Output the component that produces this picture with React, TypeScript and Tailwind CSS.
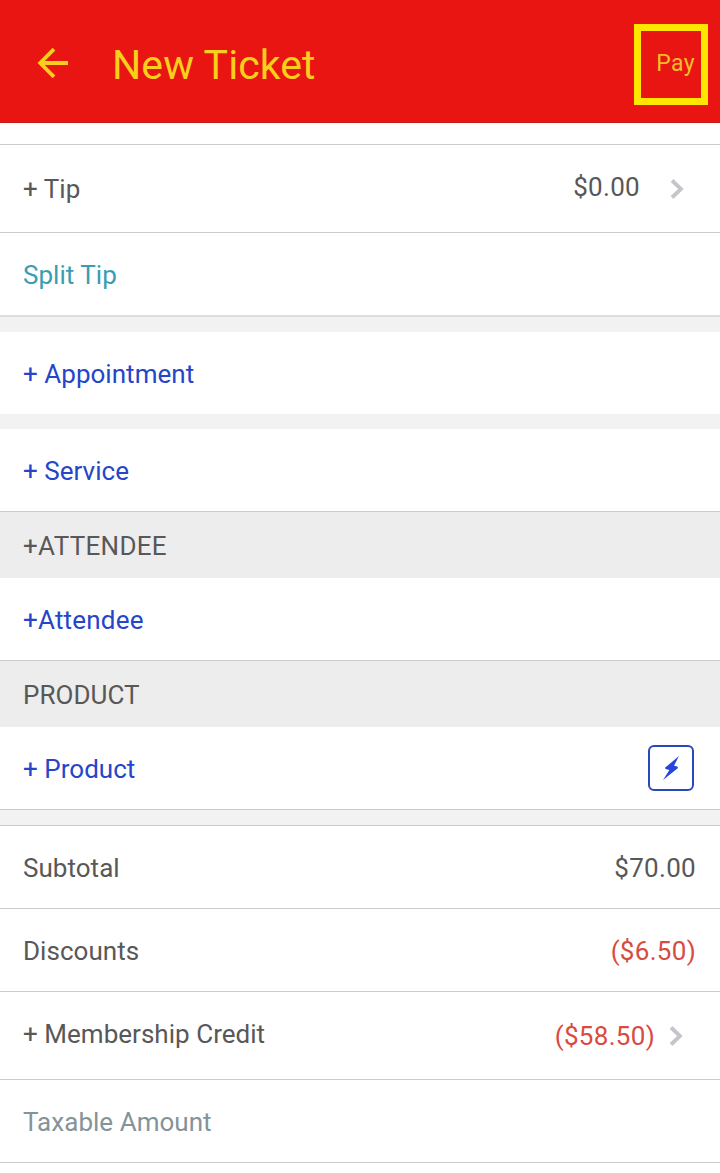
import { FC, ReactNode } from "react";
import clsx from "clsx";

const Chevron: FC = () => (
  <svg className="block h-5 w-3.5" viewBox="0 0 14 20" fill="none">
    <path d="M2 1.5 L11 10 L2 18.5" stroke="#c5c6cb" strokeWidth="3.8" />
  </svg>
);

interface IRowProps {
  label: string;
  className?: string;
  labelClassName?: string;
  children?: ReactNode;
}

const Row: FC<IRowProps> = ({ label, className, labelClassName, children }) => (
  <div
    className={clsx(
      "flex items-center justify-between pl-[23px] pr-6",
      className
    )}
  >
    <span className={labelClassName}>{label}</span>
    {children}
  </div>
);

const SectionTitle: FC<{ label: string; className?: string }> = ({
  label,
  className,
}) => (
  <h2
    className={clsx(
      "flex h-[67px] items-center border-t border-[#cbcbcb] bg-[#ededed] pl-[23px] pt-0.5",
      className
    )}
  >
    {label}
  </h2>
);

export default function App() {
  return (
    <div className="h-[1173px] w-[720px] overflow-hidden bg-white font-['Roboto',sans-serif] text-[26px] leading-[30px] tracking-[0.03px] text-[#585858]">
      <header className="flex h-[123px] items-center justify-between border-b border-[#c41b1b] bg-[#e81513] pl-[37px] pr-3 pt-1.5 text-[#f9cf1c]">
        <div className="flex items-center">
          <button className="mb-[3px]">
            <svg className="block h-8 w-8" viewBox="0 0 32 32" fill="none">
              <path
                d="M31 16 H4 M17 2.2 L3.2 16 L17 29.8"
                stroke="currentColor"
                strokeWidth="3.8"
              />
            </svg>
          </button>
          <h1 className="ml-[43px] pt-0.5 text-[41px] leading-[48px] tracking-[0.1px]">
            New Ticket
          </h1>
        </div>
        <button className="flex h-[81px] w-[74px] items-center justify-end border-[7px] border-[#ffe600] pr-1.5 text-[23px] tracking-[0.4px] text-[#f6bd27]">
          Pay
        </button>
      </header>

      <main>
        <div className="h-[21px]" />
        <Row
          label="+ Tip"
          className="h-[88px] border-t border-[#cbcbcb]"
          labelClassName="pt-px"
        >
          <div className="flex items-center pr-3">
            <span className="mr-[30px] pb-[3px] tracking-[0.3px]">$0.00</span>
            <Chevron />
          </div>
        </Row>
        <Row
          label="Split Tip"
          className="h-[85px] border-t border-b-2 border-t-[#cbcbcb] border-b-[#dddddd]"
          labelClassName="pt-0.5 text-[#3a9db3]"
        />
        <div className="h-[15px] bg-[#f2f2f2]" />
        <Row
          label="+ Appointment"
          className="h-[82px]"
          labelClassName="pt-0.5 text-[#2645c8]"
        />
        <div className="h-[15px] bg-[#f2f2f2]" />
        <Row
          label="+ Service"
          className="h-[82px]"
          labelClassName="pt-0.5 text-[#2645c8]"
        />
        <SectionTitle label="+ATTENDEE" className="tracking-[0.3px]" />
        <Row
          label="+Attendee"
          className="h-[82px]"
          labelClassName="pt-0.5 tracking-[0.2px] text-[#2645c8]"
        />
        <SectionTitle label="PRODUCT" />
        <Row
          label="+ Product"
          className="h-[82px]"
          labelClassName="pt-0.5 text-[#2645c8]"
        >
          <button className="mr-0.5 flex h-[46px] w-[46px] items-center justify-center rounded-md border-2 border-[#2b48b8]">
            <svg className="block h-6 w-4" viewBox="0 0 16 24">
              <path
                d="M16 0 L2 11.8 L2.6 13 L6.4 14 L0 24 L15 12 L14.4 10.6 L11 9.8 Z"
                fill="#2645dc"
              />
            </svg>
          </button>
        </Row>
        <div className="h-[17px] border-y border-[#cbcbcb] bg-[#f2f2f2]" />
        <Row
          label="Subtotal"
          className="h-[83px] border-b border-[#cbcbcb]"
          labelClassName="pt-0.5"
        >
          <span className="pt-0.5 tracking-[0.3px]">$70.00</span>
        </Row>
        <Row
          label="Discounts"
          className="h-[83px] border-b border-[#cbcbcb]"
          labelClassName="pt-0.5"
        >
          <span className="pt-0.5 tracking-[0.3px] text-[#d84b3f]">
            ($6.50)
          </span>
        </Row>
        <Row
          label="+ Membership Credit"
          className="h-[88px] border-b border-[#cbcbcb]"
          labelClassName="pb-[3px]"
        >
          <div className="flex items-center pr-[13px]">
            <span className="mr-[14px] pt-px tracking-[0.3px] text-[#d84b3f]">
              ($58.50)
            </span>
            <Chevron />
          </div>
        </Row>
        <Row
          label="Taxable Amount"
          className="h-[83px] border-b border-[#cbcbcb]"
          labelClassName="pt-0.5 text-[#84939a]"
        />
      </main>
    </div>
  );
}
